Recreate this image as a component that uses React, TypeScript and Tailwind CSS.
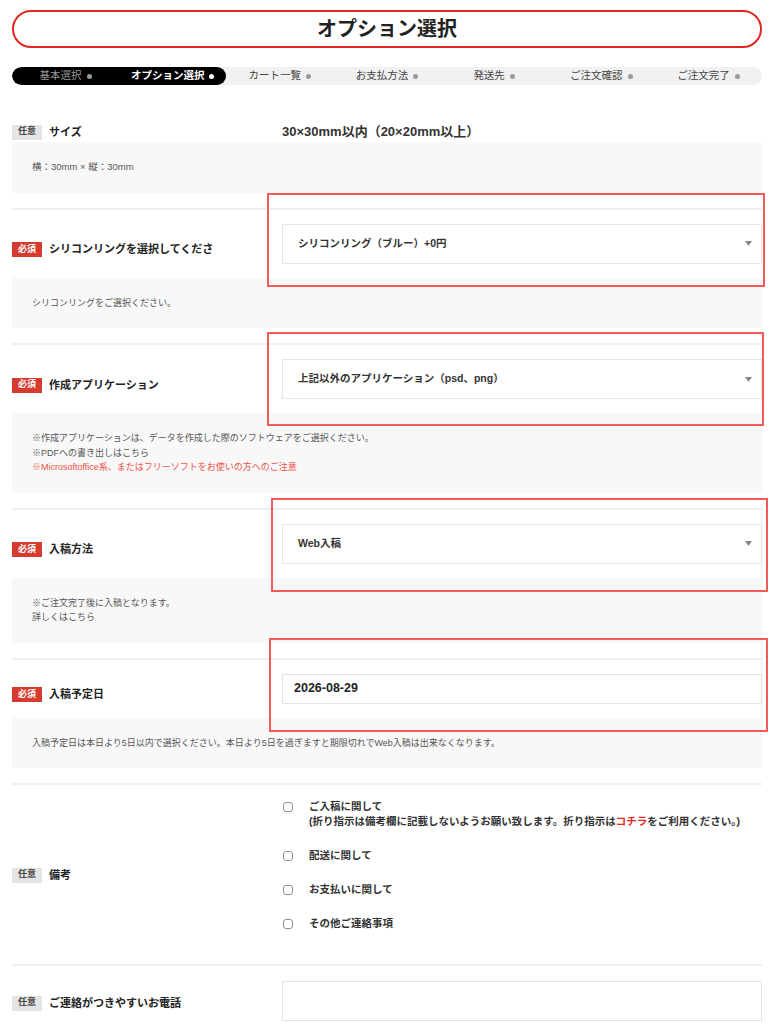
import React from 'react';

const steps = ['基本選択', 'オプション選択', 'カート一覧', 'お支払方法', '発送先', 'ご注文確認', 'ご注文完了'];

const Badge = ({ req }: { req?: boolean }) => (
  <span
    className={`inline-flex h-[15px] w-[30px] shrink-0 items-center justify-center text-[9px] font-bold ${
      req ? 'bg-[#d63b2f] text-white' : 'bg-[#e4e4e4] text-[#444]'
    }`}
  >
    {req ? '必須' : '任意'}
  </span>
);

const Label = ({ req, text, pad = 'pt-[12px]' }: { req?: boolean; text: string; pad?: string }) => (
  <div className={`flex w-[270px] shrink-0 items-center gap-[7px] ${pad}`}>
    <Badge req={req} />
    <span className="max-w-[165px] overflow-hidden whitespace-nowrap text-[11px] font-bold text-[#222]">{text}</span>
  </div>
);

const Select = ({ value }: { value: string }) => (
  <div className="flex h-[40px] flex-1 items-center justify-between border border-[#e6e6e6] bg-white pl-[15px] pr-[9px]">
    <span className="text-[10.5px] font-bold text-[#333]">{value}</span>
    <svg width="7" height="5" viewBox="0 0 7 5">
      <path d="M0 0 L7 0 L3.5 5 Z" fill="#8a8a8a" />
    </svg>
  </div>
);

const Help = ({ children }: { children: React.ReactNode }) => (
  <div className="mt-[14px] bg-[#f8f8f8] px-[20px] py-[18px] text-[9px] leading-[14.5px] text-[#555]">{children}</div>
);

// red annotation frame drawn over a row
const Frame = ({ top, left, width }: { top: number; left: number; width: number }) => (
  <div
    className="pointer-events-none absolute h-[94px] border-2 border-[#f45a5a]"
    style={{ top, left, width }}
  />
);

const Row = ({ children, frame }: { children: React.ReactNode; frame?: { top: number; left: number; width: number } }) => (
  <div className="relative border-t-2 border-[#efefef] pb-[15px] pt-[14px]">
    {children}
    {frame && <Frame {...frame} />}
  </div>
);

export default function App() {
  return (
    <div className="min-h-screen bg-white px-[12px] pt-[10px] font-['Liberation_Sans','Noto_Sans_CJK_JP',sans-serif] text-[#333]">
      <div className="flex h-[38px] items-center justify-center rounded-full border-2 border-[#e0261e]">
        <h1 className="text-[20px] font-bold text-[#222]">オプション選択</h1>
      </div>

      <div className="mt-[19px] grid h-[18px] grid-cols-7 overflow-hidden rounded-full bg-[#f1f1f1]">
        <div className="col-span-2 grid grid-cols-2 rounded-full bg-black">
          <div className="flex items-center justify-center gap-[5px] text-[10.5px] text-[#9a9a9a]">
            基本選択<span className="h-[5px] w-[5px] rounded-full bg-[#9a9a9a]" />
          </div>
          <div className="flex items-center justify-center gap-[5px] text-[10.5px] font-bold text-white">
            オプション選択<span className="h-[5px] w-[5px] rounded-full bg-white" />
          </div>
        </div>
        {steps.slice(2).map((s) => (
          <div key={s} className="flex items-center justify-center gap-[5px] text-[10.5px] text-[#444]">
            {s}
            <span className="h-[5px] w-[5px] rounded-full bg-[#999]" />
          </div>
        ))}
      </div>

      <div className="pb-[15px] pt-[38px]">
        <div className="flex h-[18px] items-center">
          <div className="flex w-[270px] shrink-0 items-center gap-[7px]">
            <Badge />
            <span className="text-[11px] font-bold text-[#222]">サイズ</span>
          </div>
          <span className="text-[13px] font-bold text-[#333]">30×30mm以内（20×20mm以上）</span>
        </div>
        <div className="mt-[1px] bg-[#f8f8f8] px-[20px] py-[18px] text-[9.5px] leading-[14.5px] text-[#555]">
          横：30mm × 縦：30mm
        </div>
      </div>

      <Row frame={{ top: -17, left: 255, width: 498 }}>
        <div className="flex items-center">
          <Label req text="シリコンリングを選択してください" />
          <Select value="シリコンリング（ブルー）+0円" />
        </div>
        <Help>シリコンリングをご選択ください。</Help>
      </Row>

      <Row frame={{ top: -13, left: 255, width: 497 }}>
        <div className="flex items-center">
          <Label req text="作成アプリケーション" />
          <Select value="上記以外のアプリケーション（psd、png）" />
        </div>
        <Help>
          <p>※作成アプリケーションは、データを作成した際のソフトウェアをご選択ください。</p>
          <p>※PDFへの書き出しはこちら</p>
          <p className="text-[#f0524a]">※Microsoftoffice系、またはフリーソフトをお使いの方へのご注意</p>
        </Help>
      </Row>

      <Row frame={{ top: -12, left: 259, width: 497 }}>
        <div className="flex items-center">
          <Label req text="入稿方法" />
          <Select value="Web入稿" />
        </div>
        <Help>
          <p>※ご注文完了後に入稿となります。</p>
          <p>詳しくはこちら</p>
        </Help>
      </Row>

      <Row frame={{ top: -22, left: 257, width: 499 }}>
        <div className="flex items-center">
          <Label req text="入稿予定日" />
          <div className="flex h-[30px] flex-1 items-center border border-[#e2e2e2] px-[11px] text-[12.5px] font-bold text-[#222]">
            2026-08-29
          </div>
        </div>
        <Help>入稿予定日は本日より5日以内で選択ください。本日より5日を過ぎますと期限切れでWeb入稿は出来なくなります。</Help>
      </Row>

      <div className="border-t-2 border-[#efefef] pb-[33px] pt-[14px]">
        <div className="flex items-center">
          <Label text="備考" pad="pt-[20px]" />
          <div className="flex flex-col gap-[19px] text-[10.5px] font-bold leading-[15px] text-[#333]">
            {[
              <>
                ご入稿に関して
                <br />
                (折り指示は備考欄に記載しないようお願い致します。折り指示は<span className="text-[#e8261c]">コチラ</span>をご利用ください。)
              </>,
              '配送に関して',
              'お支払いに関して',
              'その他ご連絡事項',
            ].map((t, i) => (
              <div key={i} className="flex items-start gap-[16px] pl-[1px]">
                <span className="mt-[3px] h-[10px] w-[10px] shrink-0 rounded-[3px] border border-[#8f8f8f] bg-white" />
                <span>{t}</span>
              </div>
            ))}
          </div>
        </div>
      </div>

      <div className="border-t-2 border-[#efefef] pb-[16px] pt-[15px]">
        <div className="flex items-center">
          <Label text="ご連絡がつきやすいお電話" pad="pt-[4px]" />
          <div className="h-[40px] flex-1 border border-[#e2e2e2]" />
        </div>
      </div>
    </div>
  );
}
